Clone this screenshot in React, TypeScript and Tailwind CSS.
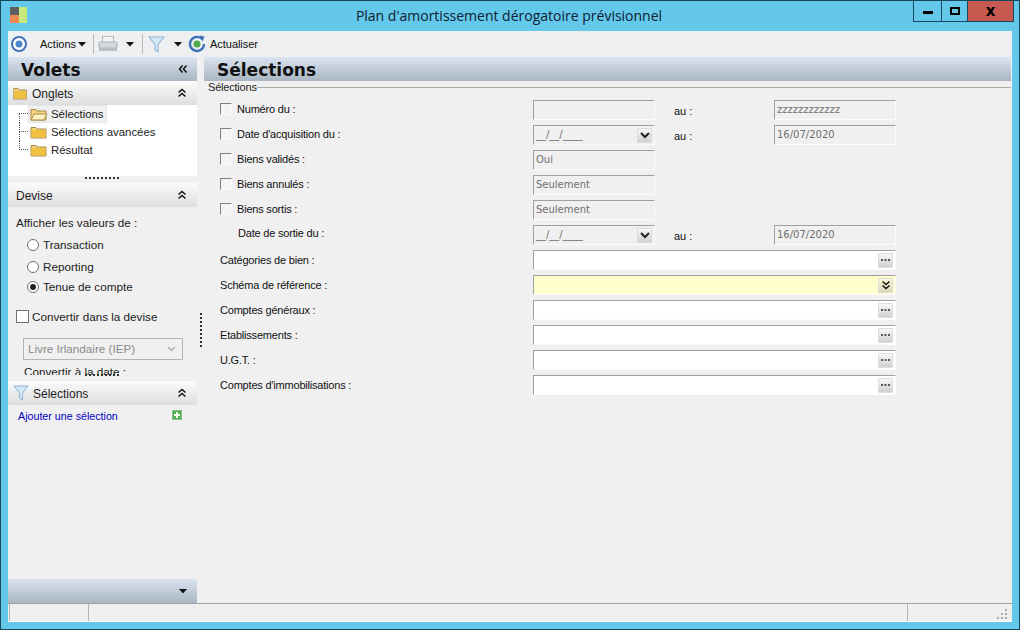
import React from 'react';

const sans = "font-['Liberation_Sans',Arial,sans-serif]";

const Folder = ({ open = false, w = 18 }: { open?: boolean; w?: number }) => (
  <svg width={w} height="14" viewBox="0 0 18 14" preserveAspectRatio="none" className="shrink-0">
    <path d="M1 2.5h5l1 1.5h9v9H1z" fill="#f4d27a" stroke="#a98c4a" />
    {open ? <path d="M1 13l3-6h13l-3 6z" fill="#fdf0c0" stroke="#a98c4a" /> : <rect x="1.5" y="5" width="14" height="7.5" fill="#f0c040" />}
  </svg>
);

const Chevrons = ({ dir = 'up' }: { dir?: 'up' | 'left' | 'down' }) => (
  <svg width="10" height="10" viewBox="0 0 10 10" className={dir === 'left' ? '-rotate-90' : dir === 'down' ? 'rotate-180' : ''}>
    <path d="M1.5 4.5L5 1.5l3.5 3M1.5 8.5L5 5.5l3.5 3" fill="none" stroke="#111" strokeWidth="1.5" />
  </svg>
);

const Caret = () => (
  <svg width="8" height="5" viewBox="0 0 8 5"><path d="M0 0h8L4 4.5z" fill="#111" /></svg>
);

const FilterIcon = ({ size = 16 }: { size?: number }) => (
  <svg width={size} height={size} viewBox="0 0 16 16" className="shrink-0">
    <path d="M1 1h14L9.5 8v7L6.5 13V8z" fill="#d5e8f6" stroke="#8fb4d4" />
  </svg>
);

const Dots = ({ vertical = false }: { vertical?: boolean }) => (
  <div className={vertical
    ? 'h-[35px] w-[2px] bg-[repeating-linear-gradient(180deg,#333_0_2px,transparent_2px_4px)]'
    : 'h-[2px] w-[35px] bg-[repeating-linear-gradient(90deg,#333_0_2px,transparent_2px_4px)]'} />
);

const PaneHeader = ({ label, icon }: { label: string; icon?: React.ReactNode }) => (
  <div className="h-6 shrink-0 flex items-center bg-gradient-to-b from-[#fbfbfb] to-[#dedede] pl-[8px] pr-[10px]">
    {icon && <span className="mr-[4px] ml-[-3px] flex">{icon}</span>}
    <span className="flex-1 text-[12px] text-[#222] pt-[1px]">{label}</span>
    <Chevrons />
  </div>
);

const Radio = ({ label, checked = false, cls }: { label: string; checked?: boolean; cls: string }) => (
  <div className={`flex items-center gap-[4px] pl-[19px] ${cls}`}>
    <span className="w-3 h-3 rounded-full border border-[#707070] bg-white flex items-center justify-center">
      {checked && <span className="w-[6px] h-[6px] rounded-full bg-[#222]" />}
    </span>
    {label}
  </div>
);

const TreeItem = ({ label, open = false, selected = false, first = false, last = false }: { label: string; open?: boolean; selected?: boolean; first?: boolean; last?: boolean }) => (
  <div className="h-[18px] flex items-center pl-[11px]">
    <span className="w-[9px] h-full flex flex-col">
      <span className={`h-[9px] border-b border-dotted border-[#555] ${first ? '' : 'border-l'}`} />
      <span className={`flex-1 border-dotted border-[#555] ${last ? '' : 'border-l'}`} />
    </span>
    <span className={`flex items-center gap-[2px] pl-[1px] pr-[2px] h-[18px] border ${selected ? 'bg-[#f0f0f0] border-[#e4e4e4]' : 'border-transparent'}`}>
      <Folder open={open} />
      <span className="text-[11.4px] text-[#222] ml-[1px] pt-[1px]">{label}</span>
    </span>
  </div>
);

const Check = () => (
  <span className="w-3 h-3 shrink-0 border-t border-l border-[#808080] border-r border-b border-r-[#fafafa] border-b-[#fafafa] bg-[#f4f4f4]" />
);

const Field = ({ w, value, bg = 'bg-[#f0f0f0]', btn }: { w: string; value?: string; bg?: string; btn?: React.ReactNode }) => (
  <div className={`${w} ${bg} h-5 flex items-center border-t border-l border-[#a0a0a0] border-r border-b border-r-[#fbfbfb] border-b-[#fbfbfb] pl-[2px] pr-[2px] font-['DejaVu_Sans',sans-serif] text-[10px] text-[#6f6f6f]`}>
    <span className="flex-1 -mt-[2px]">{value}</span>
    {btn}
  </div>
);

const MiniBtn = ({ kind }: { kind: 'dots' | 'down' | 'double' }) => (
  <span className={`w-[15px] h-[15px] flex items-center justify-center rounded-[1px] border border-[#dcdcdc] ${kind === 'double' ? 'bg-gradient-to-b from-[#fbfbd8] to-[#d8d8b8]' : 'bg-gradient-to-b from-[#f8f8f8] to-[#d0d0d0]'}`}>
    {kind === 'dots' && <svg width="9" height="3" viewBox="0 0 9 3"><path d="M0 0h2v2H0zM3.5 0h2v2h-2zM7 0h2v2H7z" fill="#555" /></svg>}
    {kind === 'down' && <svg width="10" height="7" viewBox="0 0 10 7"><path d="M1 1l4 4 4-4" fill="none" stroke="#222" strokeWidth="2" /></svg>}
    {kind === 'double' && <Chevrons dir="down" />}
  </span>
);

const Row = ({ label, check = false, indent = false, low = false, children }: { label: string; check?: boolean; indent?: boolean; low?: boolean; children: React.ReactNode }) => (
  <div className="h-5 flex items-center">
    <div className={`w-[313px] shrink-0 flex items-center gap-[5px] text-[11px] tracking-[-0.2px] text-[#111] ${low ? '' : '-mt-[2px]'} ${indent ? 'pl-[18px] -mt-[3px]' : ''}`}>
      {check && <Check />}
      <span>{label}</span>
    </div>
    {children}
  </div>
);

const Au = () => <span className="w-[119px] pl-[19px] pt-[2px] text-[11px] text-[#111]">au :</span>;

export default function App() {
  return (
    <div className={`w-[1020px] h-[630px] bg-[#63c8ea] border border-[#17495c] flex flex-col overflow-hidden ${sans}`}>
      {/* title bar */}
      <div className="h-[30px] shrink-0 flex items-start pl-[9px]">
        <div className="mt-[6px] w-[17px] h-[16px] grid grid-cols-2 grid-rows-2">
          <span className="bg-[#5e5e5e]" />
          <span className="bg-[#c8e87c] row-span-2" />
          <span className="bg-[#f08850]" />
        </div>
        <div className="flex-1 text-center text-[14px] font-['Open_Sans',sans-serif] text-[#102030] mt-[4px] pl-[78px]">Plan d'amortissement dérogatoire prévisionnel</div>
        <div className="flex h-[21px] mr-[5px] border border-t-0 border-[#17495c]">
          <span className="w-[28px] flex items-center justify-center border-r border-[#17495c]"><span className="w-[10px] h-[3px] mt-[3px] bg-black" /></span>
          <span className="w-[26px] flex items-center justify-center border-r border-[#17495c]"><span className="w-[10px] h-[8px] border-2 border-black" /></span>
          <span className="w-[45px] flex items-center justify-center bg-[#c75a50] text-[15px] font-bold font-['DejaVu_Sans',sans-serif] text-black leading-none">x</span>
        </div>
      </div>

      {/* window body */}
      <div className="flex-1 mx-[7px] mb-[7px] bg-[#f0f0f0] flex flex-col min-h-0">
        {/* toolbar */}
        <div className="h-[26px] shrink-0 bg-[#eeeff0] flex items-center text-[11px] text-[#111]">
          <svg width="18" height="18" viewBox="0 0 18 18" className="ml-[2px]">
            <circle cx="9" cy="9" r="7" fill="#fff" stroke="#3f72b8" strokeWidth="2" />
            <circle cx="9" cy="9" r="3.5" fill="#4d86cc" />
          </svg>
          <span className="ml-[12px]">Actions</span>
          <span className="ml-[2px] flex"><Caret /></span>
          <span className="ml-[7px] w-px h-[20px] bg-[#b8b8b8]" />
          <svg width="20" height="18" viewBox="0 0 20 18" className="ml-[4px]">
            <rect x="4.5" y="1.5" width="11" height="6" fill="#f4f4f4" stroke="#b4bcc4" />
            <rect x="1" y="7" width="18" height="6" rx="1" fill="#d4d8dc" stroke="#aab0b6" />
            <rect x="1" y="13" width="18" height="3" fill="#b8bec4" />
          </svg>
          <span className="ml-[8px] flex"><Caret /></span>
          <span className="ml-[8px] w-px h-[20px] bg-[#b8b8b8]" />
          <span className="ml-[5px] flex"><FilterIcon size={17} /></span>
          <span className="ml-[9px] flex"><Caret /></span>
          <svg width="18" height="18" viewBox="0 0 18 18" className="ml-[6px]">
            <path d="M14 4a7 7 0 1 0 2 5" fill="none" stroke="#3f72b8" strokeWidth="2.4" />
            <path d="M11.5 0.5l5 1-2 5z" fill="#3f72b8" />
            <circle cx="9" cy="9" r="3.5" fill="#4fae4a" />
          </svg>
          <span className="ml-[4px] tracking-[-0.05px]">Actualiser</span>
        </div>

        <div className="flex-1 flex min-h-0">
          {/* left panes */}
          <div className="w-[189px] shrink-0 flex flex-col">
            <div className="h-6 shrink-0 flex items-center bg-gradient-to-b from-[#dbe5f1] to-[#a9b5c2] pl-[13px] pr-[9px]">
              <span className="flex-1 font-['DejaVu_Sans',sans-serif] font-bold text-[17px] text-[#111] pt-[3px]">Volets</span>
              <Chevrons dir="left" />
            </div>
            <PaneHeader label="Onglets" icon={<Folder w={15} />} />
            <div className="h-[71px] shrink-0 bg-white">
              <TreeItem label="Sélections" open selected first />
              <TreeItem label="Sélections avancées" />
              <TreeItem label="Résultat" last />
            </div>
            <div className="h-[7px] shrink-0 flex justify-center pt-[1px]"><Dots /></div>
            <PaneHeader label="Devise" />
            <div className="h-[168px] shrink-0 overflow-hidden text-[11.7px] text-[#222]">
              <div className="pl-[8px] mt-[7px] h-[15px]">Afficher les valeurs de :</div>
              <Radio label="Transaction" cls="mt-[8px] h-[15px]" />
              <Radio label="Reporting" cls="mt-[7px] h-[15px]" />
              <Radio label="Tenue de compte" checked cls="mt-[5px] h-[15px]" />
              <div className="flex items-center gap-[3px] pl-[8px] mt-[15px] h-[15px]">
                <span className="w-[13px] h-[13px] bg-white border border-[#707070]" />
                Convertir dans la devise
              </div>
              <div className="ml-[15px] mt-[14px] w-[160px] h-[22px] border border-[#b4b4b4] flex items-center justify-between pl-[4px] pr-[6px] text-[#8a8a8a]">
                Livre Irlandaire (IEP)
                <svg width="9" height="6" viewBox="0 0 9 6"><path d="M1 1l3.5 3.5L8 1" fill="none" stroke="#b0b0b0" strokeWidth="1.5" /></svg>
              </div>
              <div className="pl-[16px] mt-[3px]">Convertir à la date :</div>
            </div>
            <div className="h-[6px] shrink-0 relative flex justify-center"><div className="absolute -top-[1px]"><Dots /></div></div>
            <PaneHeader label="Sélections" icon={<FilterIcon />} />
            <div className="flex-1 pl-[10px] pt-[3px] text-[10.7px] text-[#0000c0] flex justify-between pr-[15px] items-start">
              <span>Ajouter une sélection</span>
              <span className="w-[10px] h-[10px] mt-[2px] bg-[#4caf50] border border-[#8ac08a] flex items-center justify-center">
                <svg width="6" height="6" viewBox="0 0 6 6"><path d="M2 0h2v2h2v2H4v2H2V4H0V2h2z" fill="#fff" /></svg>
              </span>
            </div>
            <div className="h-6 shrink-0 flex items-center justify-end bg-gradient-to-b from-[#dbe5f1] to-[#a9b5c2] pr-[10px]">
              <Caret />
            </div>
          </div>

          {/* splitter */}
          <div className="w-[7px] shrink-0 relative flex justify-center">
            <div className="absolute top-[256px]"><Dots vertical /></div>
          </div>

          {/* main */}
          <div className="flex-1 min-w-0 flex flex-col pr-[1px]">
            <div className="h-6 shrink-0 flex items-center bg-gradient-to-b from-[#dbe5f1] to-[#a9b5c2] pl-[13px]">
              <span className="font-['DejaVu_Sans',sans-serif] font-bold text-[17px] text-[#111] pt-[3px]">Sélections</span>
            </div>
            <div className="flex items-center h-[13px] pl-[4px] text-[11px] tracking-[-0.2px] text-[#222]">
              <span>Sélections</span>
              <span className="flex-1 h-px bg-[#a8a8a8]" />
            </div>
            <div className="pl-[16px] pt-[6px] flex flex-col gap-[5px]">
              <Row label="Numéro du :" check><Field w="w-[122px]" /><Au /><Field w="w-[122px]" value="zzzzzzzzzzzz" /></Row>
              <Row label="Date d'acquisition du :" check><Field w="w-[122px]" value="__/__/____" btn={<MiniBtn kind="down" />} /><Au /><Field w="w-[122px]" value="16/07/2020" /></Row>
              <Row label="Biens validés :" check><Field w="w-[122px]" value="Oui" /></Row>
              <Row label="Biens annulés :" check><Field w="w-[122px]" value="Seulement" /></Row>
              <Row label="Biens sortis :" check><Field w="w-[122px]" value="Seulement" /></Row>
              <Row label="Date de sortie du :" indent><Field w="w-[122px]" value="__/__/____" btn={<MiniBtn kind="down" />} /><Au /><Field w="w-[122px]" value="16/07/2020" /></Row>
              <Row label="Catégories de bien :" low><Field w="w-[363px]" bg="bg-white" btn={<MiniBtn kind="dots" />} /></Row>
              <Row label="Schéma de référence :" low><Field w="w-[363px]" bg="bg-[#ffffcc]" btn={<MiniBtn kind="double" />} /></Row>
              <Row label="Comptes généraux :" low><Field w="w-[363px]" bg="bg-white" btn={<MiniBtn kind="dots" />} /></Row>
              <Row label="Etablissements :" low><Field w="w-[363px]" bg="bg-white" btn={<MiniBtn kind="dots" />} /></Row>
              <Row label="U.G.T. :" low><Field w="w-[363px]" bg="bg-white" btn={<MiniBtn kind="dots" />} /></Row>
              <Row label="Comptes d'immobilisations :" low><Field w="w-[363px]" bg="bg-white" btn={<MiniBtn kind="dots" />} /></Row>
            </div>
          </div>
        </div>

        {/* status bar */}
        <div className="h-[19px] shrink-0 flex border-t-[1px] border-[#a4a4a4] border-b border-b-white pl-[1px] pr-[1px]">
          <span className="w-[79px] border-l border-[#b4b4b4]" />
          <span className="flex-1 border-l border-[#b4b4b4]" />
          <span className="w-[104px] border-l border-[#b4b4b4] flex items-end justify-end pb-[1px] pr-[3px]">
            <svg width="11" height="11" viewBox="0 0 11 11"><path d="M8 0h2v2H8zM4 4h2v2H4zM8 4h2v2H8zM0 8h2v2H0zM4 8h2v2H4zM8 8h2v2H8z" fill="#a8a8a8" /></svg>
          </span>
        </div>
      </div>
    </div>
  );
}
